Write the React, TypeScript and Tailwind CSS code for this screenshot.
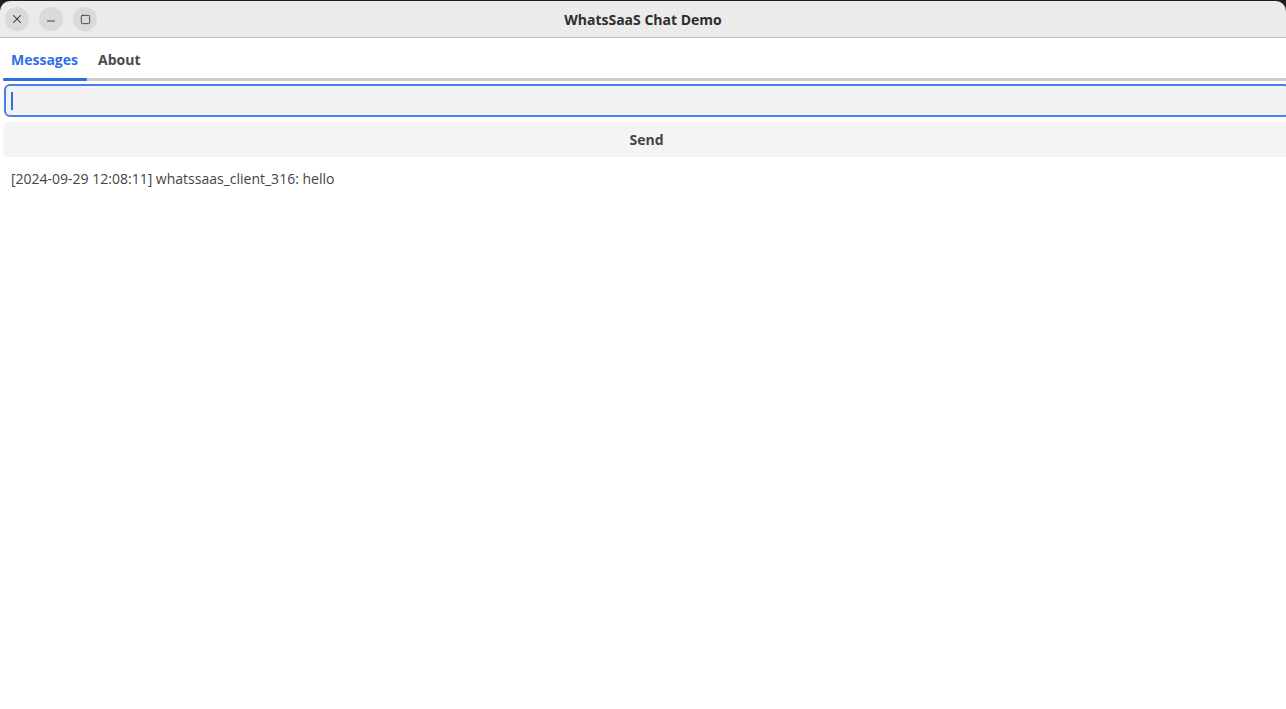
import { X, Minus, Square } from "lucide-react";

const font = { fontFamily: '"Open Sans", "Noto Sans", sans-serif' };

function TitleBar() {
  return (
    <div className="bg-[#1e1e1e] pt-px">
      <div className="relative flex h-[37px] items-center rounded-t-[10px] border-b border-[#c4c4c4] bg-[#ebebeb] px-[5px]">
        <div className="flex items-center gap-[10px]">
          <button className="flex h-6 w-6 items-center justify-center rounded-full bg-[#dadada] text-[#2e2e2e]">
            <X size={14} strokeWidth={1.8} />
          </button>
          <button className="flex h-6 w-6 items-center justify-center rounded-full bg-[#dadada] text-[#2e2e2e]">
            <Minus size={12} strokeWidth={1.8} className="mt-[4px]" />
          </button>
          <button className="flex h-6 w-6 items-center justify-center rounded-full bg-[#dadada] text-[#2e2e2e]">
            <Square size={11} strokeWidth={1.8} />
          </button>
        </div>
        <div className="absolute inset-x-0 top-0 flex h-full items-center justify-center pointer-events-none">
          <span className="text-[14px] font-bold text-[#2e2e2e]">WhatsSaaS Chat Demo</span>
        </div>
      </div>
    </div>
  );
}

export default function App() {
  return (
    <div className="h-[709px] w-[1286px] overflow-hidden bg-white" style={font}>
      <TitleBar />
      <div className="pl-[3px] -mr-[4px]">
        <div className="flex h-[40px] items-end">
          <div className="flex h-full flex-col">
            <div className="flex flex-1 items-center px-[8px] pt-[3px] text-[14px] font-bold text-[#2f6fe6]">Messages</div>
          </div>
          <div className="flex h-full flex-col">
            <div className="flex flex-1 items-center px-[12px] pt-[3px] text-[14px] font-bold text-[#4a4a4a]">About</div>
          </div>
        </div>
        <div className="relative h-[3px] bg-[#cdcdcd]">
          <div className="absolute left-0 top-0 h-[3px] w-[84px] rounded-full bg-[#2f6fe6]"></div>
        </div>
        <div className="mt-[3px] ml-px flex h-[33px] items-center rounded-[6px] border-2 border-[#4a7fe8] bg-[#f2f2f2] px-[5px]">
          <div className="h-[18px] w-[2px] bg-[#2f6fe6]"></div>
        </div>
        <button className="mt-[5px] flex h-[35px] w-full items-center justify-center rounded-[5px] bg-[#f4f4f4] text-[14px] font-bold text-[#454545]">
          Send
        </button>
        <div className="px-[8px] pt-[11px] text-[14px] text-[#444444]">
          [2024-09-29 12:08:11] whatssaas_client_316: hello
        </div>
      </div>
    </div>
  );
}
